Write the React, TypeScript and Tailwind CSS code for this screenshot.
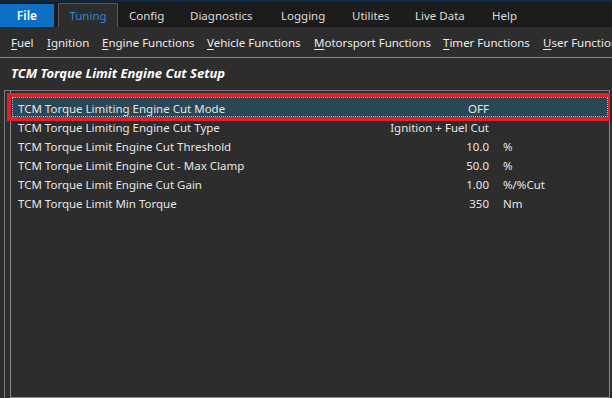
import React from "react";

const TABS = [
  { label: "Config", width: "w-[61px]" },
  { label: "Diagnostics", width: "w-[91px]" },
  { label: "Logging", width: "w-[71px]" },
  { label: "Utilites", width: "w-[63px]" },
  { label: "Live Data", width: "w-[77px]" },
  { label: "Help", width: "w-[40px]" },
];

const MENU = [
  { key: "F", rest: "uel", width: "w-[36px]" },
  { key: "I", rest: "gnition", width: "w-[55px]" },
  { key: "E", rest: "ngine Functions", width: "w-[105px]" },
  { key: "V", rest: "ehicle Functions", width: "w-[107px]" },
  { key: "M", rest: "otorsport Functions", width: "w-[129px]" },
  { key: "T", rest: "imer Functions", width: "w-[100px]" },
  { key: "U", rest: "ser Functions", width: "w-[100px]" },
];

const ROWS = [
  { name: "TCM Torque Limiting Engine Cut Mode", value: "OFF", unit: "", selected: true },
  { name: "TCM Torque Limiting Engine Cut Type", value: "Ignition + Fuel Cut", unit: "" },
  { name: "TCM Torque Limit Engine Cut Threshold", value: "10.0", unit: "%" },
  { name: "TCM Torque Limit Engine Cut - Max Clamp", value: "50.0", unit: "%" },
  { name: "TCM Torque Limit Engine Cut Gain", value: "1.00", unit: "%/%Cut" },
  { name: "TCM Torque Limit Min Torque", value: "350", unit: "Nm" },
];

export default function App() {
  return (
    <div
      className="flex h-[398px] w-[612px] flex-col overflow-hidden bg-[#2d2d2d] text-[11.5px] text-[#e6e6e6]"
      style={{ fontFamily: '"Noto Sans", "Open Sans", sans-serif' }}
    >
      {/* ribbon tabs */}
      <div className="flex h-[27px] shrink-0 items-end border-t-2 border-[#0c2a48] bg-[#1c1c1c] whitespace-nowrap">
        <div className="flex h-[23px] w-[54px] items-center justify-center bg-[#0e6fc6] text-[12px] font-semibold text-white">
          File
        </div>
        <div className="ml-[4px] flex h-[24px] w-[60px] items-center justify-center border border-b-0 border-[#5a5a5a] bg-[#2d2d2d] pt-[1px] text-[#2f86d2]">
          Tuning
        </div>
        <div className="flex h-[24px] items-center pl-[11px] pt-[1px] text-[#dcdcdc]">
          {TABS.map((t) => (
            <span key={t.label} className={t.width}>
              {t.label}
            </span>
          ))}
        </div>
      </div>

      {/* sub menu */}
      <div className="flex h-[31px] shrink-0 items-center border-b border-[#8a8a8a] pl-[11px] pt-[2px] whitespace-nowrap text-[#ececec]">
        {MENU.map((m) => (
          <span key={m.key + m.rest} className={"shrink-0 " + m.width}>
            <span className="underline underline-offset-2">{m.key}</span>
            {m.rest}
          </span>
        ))}
      </div>

      <div className="flex h-[32px] shrink-0 items-center pl-[11px] text-[13px] font-bold italic text-white">
        TCM Torque Limit Engine Cut Setup
      </div>

      {/* parameter list */}
      <div className="ml-[4px] mr-[2px] flex flex-1 border-l border-t border-[#7a7a7a]">
        <div className="ml-[5px] flex-1 border-b border-l border-r border-[#8a8a8a] pt-[6px]">
          {ROWS.map((r) => (
            <div
              key={r.name}
              className={"relative flex items-center pt-[3px] " + (r.selected ? "h-[20px]" : "h-[19px]")}
            >
              {r.selected && (
                <>
                  <div className="pointer-events-none absolute -left-[4px] -right-[1px] -top-[4px] -bottom-[4px] border-4 border-[#e3202a]" />
                  <div className="absolute inset-x-[1px] inset-y-0 border border-dotted border-[#9cc3d6] bg-[#2a4756]" />
                </>
              )}
              <span className="relative w-[330px] pl-[7px]">{r.name}</span>
              <span className="relative w-[148px] text-right">{r.value}</span>
              <span className="relative pl-[14px]">{r.unit}</span>
            </div>
          ))}
        </div>
      </div>
    </div>
  );
}
